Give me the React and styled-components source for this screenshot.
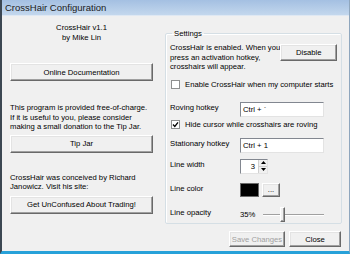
import React from "react";
import styled, { createGlobalStyle } from "styled-components";

const GlobalStyle = createGlobalStyle`
  html, body {
    margin: 0;
    padding: 0;
    background: #f0f0f0;
  }
  body {
    font-family: "Liberation Sans", Arial, sans-serif;
    font-size: 7.7px;
    color: #000;
  }
`;

const Window = styled.div`
  width: 350px;
  height: 254px;
  box-sizing: border-box;
  display: flex;
  flex-direction: column;
  background: #f0f0f0;
  border-left: 2px solid #3c4752;
  border-right: 1px solid #8fa6bd;
  border-bottom: 3px solid #27a1d9;
  overflow: hidden;
`;

const TitleBar = styled.div`
  height: 15px;
  flex: none;
  display: flex;
  align-items: center;
  padding-left: 3px;
  background: linear-gradient(#a4c0e2, #c3d7ed);
  border-bottom: 1px solid #dfe8f3;
  font-size: 9.5px;
  color: #1a1a1a;
`;

const Body = styled.div`
  flex: 1;
  display: flex;
  padding-left: 8px;
  gap: 12px;
`;

const LeftColumn = styled.div`
  width: 143px;
  display: flex;
  flex-direction: column;
  padding-top: 7px;
`;

const About = styled.div`
  text-align: center;
  line-height: 10px;
`;

const Para = styled.p`
  margin: ${(p) => p.$top}px 0 0;
  line-height: 9.6px;
`;

const Button = styled.button`
  font-family: inherit;
  font-size: 7.7px;
  color: ${(p) => (p.disabled ? "#a0a0a0" : "#000")};
  background: #f0f0f0;
  box-sizing: border-box;
  width: ${(p) => p.$w || "100%"};
  height: ${(p) => p.$h || 18}px;
  margin-top: ${(p) => p.$top || 0}px;
  margin-left: ${(p) => p.$left || 0}px;
  padding: 0;
  border: 1px solid;
  border-color: #fff #696969 #696969 #fff;
  box-shadow: inset -1px -1px 0 #a0a0a0, inset 1px 1px 0 #e3e3e3;
  flex: none;
`;

const RightColumn = styled.div`
  width: 176px;
  display: flex;
  flex-direction: column;
  padding-top: 13px;
`;

const Group = styled.fieldset`
  margin: 0;
  padding: 4px 4px 5px 4px;
  height: 195px;
  box-sizing: border-box;
  border: 1px solid #d5dfe5;
  border-radius: 2px;
  box-shadow: 1px 1px 0 #fff inset;
  display: flex;
  flex-direction: column;
`;

const Legend = styled.legend`
  padding: 0 2px;
  margin-left: 2px;
  line-height: 9px;
`;

const Intro = styled.div`
  display: flex;
  justify-content: space-between;
  align-items: flex-start;
  margin-top: 1px;
`;

const IntroText = styled.div`
  line-height: 9.6px;
  white-space: nowrap;
`;

const CheckRow = styled.label`
  display: flex;
  align-items: center;
  gap: 5px;
  height: 12px;
  margin-top: ${(p) => p.$top}px;
  padding-left: 1px;
`;

const Box = styled.span`
  width: 7px;
  height: 7px;
  flex: none;
  background: #fff;
  border: 1px solid #8e8f8f;
  display: flex;
  align-items: center;
  justify-content: center;
`;

const FormRow = styled.div`
  display: flex;
  align-items: center;
  height: ${(p) => p.$h || 15}px;
  margin-top: ${(p) => p.$top}px;
`;

const Label = styled.span`
  width: 70px;
  flex: none;
  margin-top: -3px;
`;

const TextBox = styled.div`
  width: 84px;
  height: 15px;
  box-sizing: border-box;
  background: #fff;
  border: 1px solid;
  border-color: #828790 #e3e3e3 #e3e3e3 #828790;
  display: flex;
  align-items: center;
  padding-left: 2px;
`;

const Spinner = styled.div`
  width: 28px;
  height: 15px;
  box-sizing: border-box;
  background: #fff;
  border: 1px solid;
  border-color: #828790 #e3e3e3 #e3e3e3 #828790;
  display: flex;
  align-items: stretch;
`;

const SpinValue = styled.span`
  flex: 1;
  text-align: right;
  padding-right: 3px;
  align-self: center;
`;

const SpinArrows = styled.div`
  width: 8px;
  display: flex;
  flex-direction: column;
  border-left: 1px solid #d0d0d0;
`;

const Arrow = styled.div`
  flex: 1;
  background: #f0f0f0;
  display: flex;
  align-items: center;
  justify-content: center;
  border-bottom: ${(p) => (p.$up ? "1px solid #d0d0d0" : "none")};
`;

const Swatch = styled.div`
  width: 19px;
  height: 14px;
  box-sizing: border-box;
  background: #000;
  border: 1px solid #6a6a6a;
`;

const Slider = styled.div`
  position: relative;
  width: 61px;
  height: 15px;
  margin-left: 8px;
`;

const Track = styled.div`
  position: absolute;
  left: 0;
  right: 0;
  top: 7px;
  height: 1px;
  background: #a0a0a0;
  border-bottom: 1px solid #fff;
`;

const Thumb = styled.div`
  position: absolute;
  left: 17px;
  top: 0;
  width: 5px;
  height: 15px;
  box-sizing: border-box;
  background: #f0f0f0;
  border: 1px solid;
  border-color: #fff #696969 #696969 #fff;
  box-shadow: inset -1px -1px 0 #a0a0a0;
`;

const Footer = styled.div`
  display: flex;
  justify-content: flex-end;
  gap: 4px;
  margin-top: 7px;
`;

const Check = ({ checked }) => (
  <Box>
    {checked && (
      <svg width="7" height="7" viewBox="0 0 7 7">
        <path d="M1 3.5 L2.8 5.4 L6 1.3" fill="none" stroke="#000" strokeWidth="1.3" />
      </svg>
    )}
  </Box>
);

export default function App() {
  return (
    <>
      <GlobalStyle />
      <Window>
        <TitleBar>CrossHair Configuration</TitleBar>
        <Body>
          <LeftColumn>
            <About>
              CrossHair v1.1
              <br />
              by Mike Lin
            </About>
            <Button $top={20}>Online Documentation</Button>
            <Para $top={22}>
              This program is provided free-of-charge.
              <br />
              If it is useful to you, please consider
              <br />
              making a small donation to the Tip Jar.
            </Para>
            <Button $top={3}>Tip Jar</Button>
            <Para $top={20}>
              CrossHair was conceived by Richard
              <br />
              Janowicz. Visit his site:
            </Para>
            <Button $top={4}>Get UnConfused About Trading!</Button>
          </LeftColumn>
          <RightColumn>
            <Group>
              <Legend>Settings</Legend>
              <Intro>
                <IntroText>
                  CrossHair is enabled. When you
                  <br />
                  press an activation hotkey,
                  <br />
                  crosshairs will appear.
                </IntroText>
                <Button $w="57px" $h={17} $top={1}>
                  Disable
                </Button>
              </Intro>
              <CheckRow $top={7}>
                <Check />
                Enable CrossHair when my computer starts
              </CheckRow>
              <FormRow $top={11}>
                <Label>Roving hotkey</Label>
                <TextBox>Ctrl + `</TextBox>
              </FormRow>
              <CheckRow $top={2}>
                <Check checked />
                Hide cursor while crosshairs are roving
              </CheckRow>
              <FormRow $top={7}>
                <Label>Stationary hotkey</Label>
                <TextBox>Ctrl + 1</TextBox>
              </FormRow>
              <FormRow $top={6}>
                <Label>Line width</Label>
                <Spinner>
                  <SpinValue>3</SpinValue>
                  <SpinArrows>
                    <Arrow $up>
                      <svg width="5" height="3" viewBox="0 0 5 3">
                        <path d="M0 3 L2.5 0 L5 3 Z" fill="#000" />
                      </svg>
                    </Arrow>
                    <Arrow>
                      <svg width="5" height="3" viewBox="0 0 5 3">
                        <path d="M0 0 L2.5 3 L5 0 Z" fill="#000" />
                      </svg>
                    </Arrow>
                  </SpinArrows>
                </Spinner>
              </FormRow>
              <FormRow $top={9} $h={14}>
                <Label>Line color</Label>
                <Swatch />
                <Button $w="18px" $h={14} $left={3}>
                  ...
                </Button>
              </FormRow>
              <FormRow $top={10}>
                <Label>Line opacity</Label>
                <span>35%</span>
                <Slider>
                  <Track />
                  <Thumb />
                </Slider>
              </FormRow>
            </Group>
            <Footer>
              <Button $w="56px" $h={16} disabled>
                Save Changes
              </Button>
              <Button $w="52px" $h={16}>
                Close
              </Button>
            </Footer>
          </RightColumn>
        </Body>
      </Window>
    </>
  );
}
